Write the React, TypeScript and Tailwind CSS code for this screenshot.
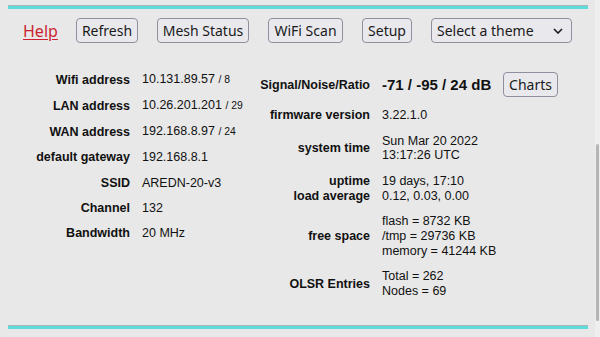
import React from "react";

const sans = { fontFamily: '"Liberation Sans", Arial, sans-serif' };
const ui = { fontFamily: '"Noto Sans", "Open Sans", sans-serif' };

function Line() {
  return (
    <div className="ml-2 mr-[7px] border-t border-[#a9b4b4] bg-[#5edcdc] h-[4px]" />
  );
}

function Btn({ w, children }: { w: string; children: React.ReactNode }) {
  return (
    <div
      className={`${w} h-[25px] flex items-center justify-center rounded-[4px] border border-[#8f8f9d] bg-[#e9e9ed] text-[14px] text-[#1a1a1a]`}
      style={ui}
    >
      {children}
    </div>
  );
}

type Row = { label: string; lines: React.ReactNode[] };

const leftRows: Row[] = [
  { label: "Wifi address", lines: [<>10.131.89.57 <span className="text-[10.4px]">/ 8</span></>] },
  { label: "LAN address", lines: [<>10.26.201.201 <span className="text-[10.4px]">/ 29</span></>] },
  { label: "WAN address", lines: [<>192.168.8.97 <span className="text-[10.4px]">/ 24</span></>] },
  { label: "default gateway", lines: ["192.168.8.1"] },
  { label: "SSID", lines: ["AREDN-20-v3"] },
  { label: "Channel", lines: ["132"] },
  { label: "Bandwidth", lines: ["20 MHz"] },
];

const rightRows: Row[] = [
  { label: "firmware version", lines: ["3.22.1.0"] },
  { label: "system time", lines: ["Sun Mar 20 2022", "13:17:26 UTC"] },
];

const rightRows2: Row[] = [
  { label: "free space", lines: ["flash = 8732 KB", "/tmp = 29736 KB", "memory = 41244 KB"] },
  { label: "OLSR Entries", lines: ["Total = 262", "Nodes = 69"] },
];

function TRow({ r, pad }: { r: Row; pad: string }) {
  return (
    <>
      <div className={`flex items-center justify-end ${pad} font-bold text-right`}>{r.label}</div>
      <div className={`flex flex-col justify-center ${pad}`}>
        {r.lines.map((l, i) => (
          <div key={i}>{l}</div>
        ))}
      </div>
    </>
  );
}

export default function App() {
  return (
    <div className="flex w-[600px] h-[337px] overflow-hidden bg-[#e8e8e8] text-[#111]">
      <div className="w-[595px] flex flex-col">
        <div className="h-[5px]" />
        <Line />
        <div className="mt-[9px] flex items-center justify-center gap-[19px]">
          <a
            className="text-[16px] text-[#cc1f2f] underline decoration-1 underline-offset-[2px] w-[34px] leading-[20px]"
            style={ui}
          >
            Help
          </a>
          <Btn w="w-[62px]">Refresh</Btn>
          <Btn w="w-[92px]">Mesh Status</Btn>
          <Btn w="w-[75px]">WiFi Scan</Btn>
          <Btn w="w-[50px]">Setup</Btn>
          <div
            className="w-[141px] h-[25px] flex items-center justify-between pl-[5px] pr-[8px] rounded-[4px] border border-[#8f8f9d] bg-[#e9e9ed] text-[14px] text-[#1a1a1a]"
            style={ui}
          >
            <span>Select a theme</span>
            <svg width="10" height="6" viewBox="0 0 10 6" fill="none">
              <path d="M1 1 L5 5 L9 1" stroke="#1a1a1a" strokeWidth="1.6" />
            </svg>
          </div>
        </div>
        <div className="mt-[24px] flex text-[12.5px] leading-[14.7px]" style={sans}>
          <div className="w-[250px] grid grid-cols-[130px_1fr] gap-x-[12px] content-start">
            {leftRows.map((r) => (
              <TRow key={r.label} r={r} pad="py-[5.2px]" />
            ))}
          </div>
          <div className="grid grid-cols-[120px_auto] gap-x-[12px] content-start">
            <div className="flex items-center justify-end py-[5.4px] font-bold">Signal/Noise/Ratio</div>
            <div className="flex items-center py-[5.4px]">
              <span className="text-[15px] font-bold w-[121px]">-71 / -95 / 24 dB</span>
              <Btn w="w-[55px]">Charts</Btn>
            </div>
            {rightRows.map((r) => (
              <TRow key={r.label} r={r} pad="py-[5.4px]" />
            ))}
            <div className="flex flex-col items-end justify-center py-[5.4px] font-bold">
              <div>uptime</div>
              <div>load average</div>
            </div>
            <div className="flex flex-col justify-center py-[5.4px]">
              <div>19 days, 17:10</div>
              <div>0.12, 0.03, 0.00</div>
            </div>
            {rightRows2.map((r) => (
              <TRow key={r.label} r={r} pad="py-[5.5px]" />
            ))}
          </div>
        </div>
        <div className="mt-auto mb-[8px]">
          <Line />
        </div>
      </div>
      <div className="w-[5px] bg-[#eeeeee] flex flex-col">
        <div className="mt-[144px] ml-[1px] w-[3px] h-[177px] rounded-full bg-[#b5b5b5]" />
      </div>
    </div>
  );
}
